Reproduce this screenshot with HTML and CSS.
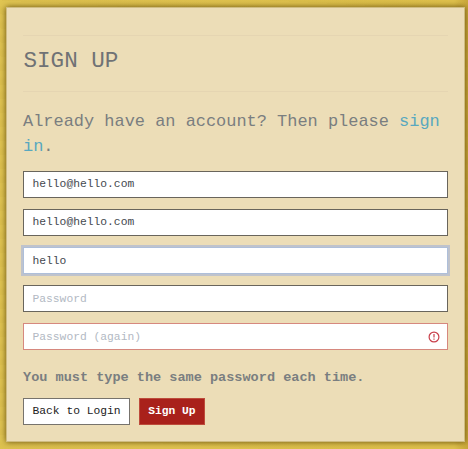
FILE: index.html
```html
<!DOCTYPE html>
<html lang="en">
<head>
<meta charset="utf-8">
<title>Sign Up</title>
<link rel="stylesheet" href="styles.css">
</head>
<body>
<main class="panel">
  <h1 class="title">SIGN UP</h1>
  <p class="lead">Already have an account? Then please <a href="#">sign in</a>.</p>
  <form class="form">
    <div class="field">hello@hello.com</div>
    <div class="field">hello@hello.com</div>
    <div class="field focused">hello</div>
    <div class="field empty">Password</div>
    <div class="field empty invalid"><span>Password (again)</span>
      <svg class="alert" viewBox="0 0 12 12" fill="none" stroke="#c9404c"><circle cx="6" cy="6" r="4.9" stroke-width="1.2"/><path d="M6 3.1v3.5M6 7.6v1.2" stroke-width="1.2"/></svg>
    </div>
    <p class="error">You must type the same password each time.</p>
    <div class="actions">
      <button type="button" class="btn">Back to Login</button>
      <button type="button" class="btn primary">Sign Up</button>
    </div>
  </form>
</main>
</body>
</html>
```

FILE: styles.css
```css
* { box-sizing: border-box; }
html { height: 100%; }
body {
  height: 100%;
  margin: 0;
  padding: 7px 3px 7px 6px;
  overflow: hidden;
  background:
    repeating-linear-gradient(3deg, rgba(150, 115, 10, .04) 0 5px, transparent 9px 14px),
    linear-gradient(90deg, #e0c552, #dfc24c 97%, #c9a73a);
  font-family: "Courier New", "Liberation Mono", monospace;
  color: #7a7e80;
}
.panel {
  height: 435px;
  padding: 27px 16px 0;
  background: #ecddb7;
  border: 1px solid #cfbc82;
  box-shadow: 0 0 6px rgba(80, 58, 0, .85);
}
.title {
  height: 57px;
  margin: 0;
  border: solid #e5d5b2;
  border-width: 1px 0;
  font-size: 22.6px;
  font-weight: 400;
  line-height: 51px;
  text-indent: 0.5px;
  color: #707275;
}
.lead {
  margin: 17px 0 11px;
  font-size: 16.96px;
  line-height: 25.4px;
}
.lead a { color: #58a8bf; text-decoration: none; }
.field {
  display: flex;
  align-items: center;
  justify-content: space-between;
  height: 27px;
  margin-bottom: 11.1px;
  padding: 0 7px 0 8.5px;
  background: #fff;
  border: 1px solid #69655c;
  font-size: 11.3px;
  color: #44494f;
}
.focused { border-color: #aebfda; box-shadow: 0 0 0 2px #bfc3cc; }
.empty { color: #b2b9c3; }
.field.invalid { border-color: #d6887e; margin-bottom: 0; }
.alert { width: 12px; height: 12px; }
.error {
  margin: 16px 0 8px;
  font-size: 13.55px;
  font-weight: 700;
  line-height: 24px;
}
.actions { display: flex; gap: 9px; }
.btn {
  height: 27px;
  padding: 0 8.5px 1px;
  border: 1px solid #77736c;
  background: #fff;
  color: #222;
  font: 400 11.3px "Courier New", "Liberation Mono", monospace;
  white-space: nowrap;
}
.primary { padding: 0 8px 1px; background: #a9211b; border-color: #bd4b3b; color: #fff; font-weight: 700; }
```
